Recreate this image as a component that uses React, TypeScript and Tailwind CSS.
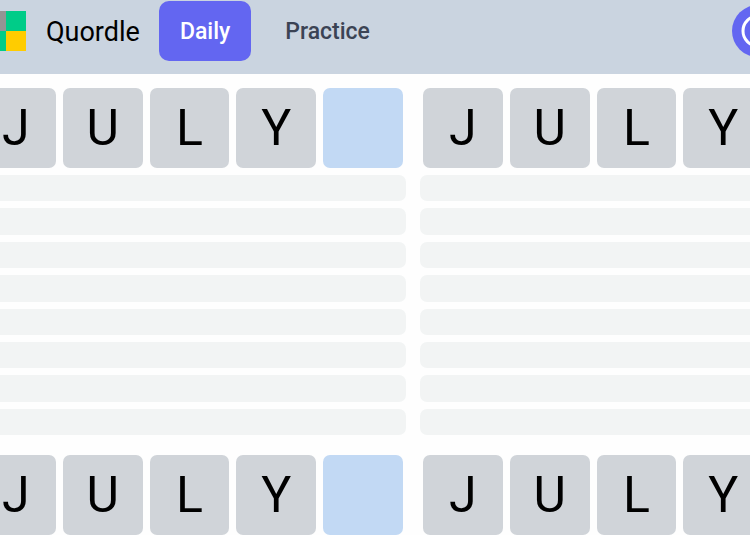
import React from "react";
import { CircleHelp } from "lucide-react";
import { clsx } from "clsx";

const WORD_LENGTH = 5;
const GUESS = "JULY";
const FUTURE_ROWS = 8;

const BOARDS = [
  { id: 1, collapsed: true },
  { id: 2, collapsed: true },
  { id: 3, collapsed: false },
  { id: 4, collapsed: false },
];

function Logo() {
  return (
    <svg viewBox="0 0 40 40" className="w-10 h-10 shrink-0" aria-hidden="true" shapeRendering="crispEdges">
      <rect width="20" height="20" fill="#949494" />
      <rect x="20" width="20" height="20" fill="#00cc88" />
      <rect y="20" width="20" height="20" fill="#00cc88" />
      <rect x="20" y="20" width="20" height="20" fill="#ffcc00" />
    </svg>
  );
}

function Header() {
  return (
    <header className="flex items-start bg-[#cad4e0] h-[74px] pt-px -ml-[14px] -mr-[34px]">
      <div className="flex items-center h-[60px] mr-[19px]">
        <Logo />
        <h1 className="ml-5 pt-0.5 text-[27px] leading-8 text-black">Quordle</h1>
      </div>
      <nav className="flex gap-[13px]">
        <button className="h-[60px] px-[21px] pt-0.5 rounded-[10px] bg-[#6366f1] text-white text-[23px] font-medium">
          Daily
        </button>
        <button className="h-[60px] px-[21px] pt-0.5 rounded-[10px] text-[#3b4354] text-[23px] font-medium">
          Practice
        </button>
      </nav>
      <button
        aria-label="Help"
        className="ml-auto mt-1 w-[52px] h-[52px] shrink-0 rounded-full bg-[#6366f1] text-white flex items-center justify-center"
      >
        <CircleHelp className="w-9 h-9" />
      </button>
    </header>
  );
}

function Tile({ letter, active }: { letter?: string; active: boolean }) {
  return (
    <div
      className={clsx(
        "h-20 rounded-[7px] flex items-center justify-center text-[50px] leading-none text-black",
        active ? "bg-[#c2d9f4]" : "bg-[#d0d4d9]"
      )}
    >
      {letter}
    </div>
  );
}

function Board({ collapsed }: { collapsed: boolean }) {
  return (
    <section>
      <div className="grid grid-cols-5 gap-[7px] px-[3px]">
        {Array.from({ length: WORD_LENGTH }, (_, i) => (
          <Tile key={i} letter={GUESS[i]} active={i === GUESS.length} />
        ))}
      </div>
      {collapsed && (
        <div className="grid grid-rows-8 gap-[7px] h-[260px] mt-[7px]">
          {Array.from({ length: FUTURE_ROWS }, (_, i) => (
            <div key={i} className="rounded-[7px] bg-[#f2f4f4]" />
          ))}
        </div>
      )}
    </section>
  );
}

export default function App() {
  return (
    <div className="overflow-hidden bg-[#fefefe] font-['Roboto',sans-serif]">
      <Header />
      <main className="grid grid-cols-2 gap-x-[14px] gap-y-5 pt-[14px] -ml-[27px] -mr-[103px]">
        {BOARDS.map((board) => (
          <Board key={board.id} collapsed={board.collapsed} />
        ))}
      </main>
    </div>
  );
}
